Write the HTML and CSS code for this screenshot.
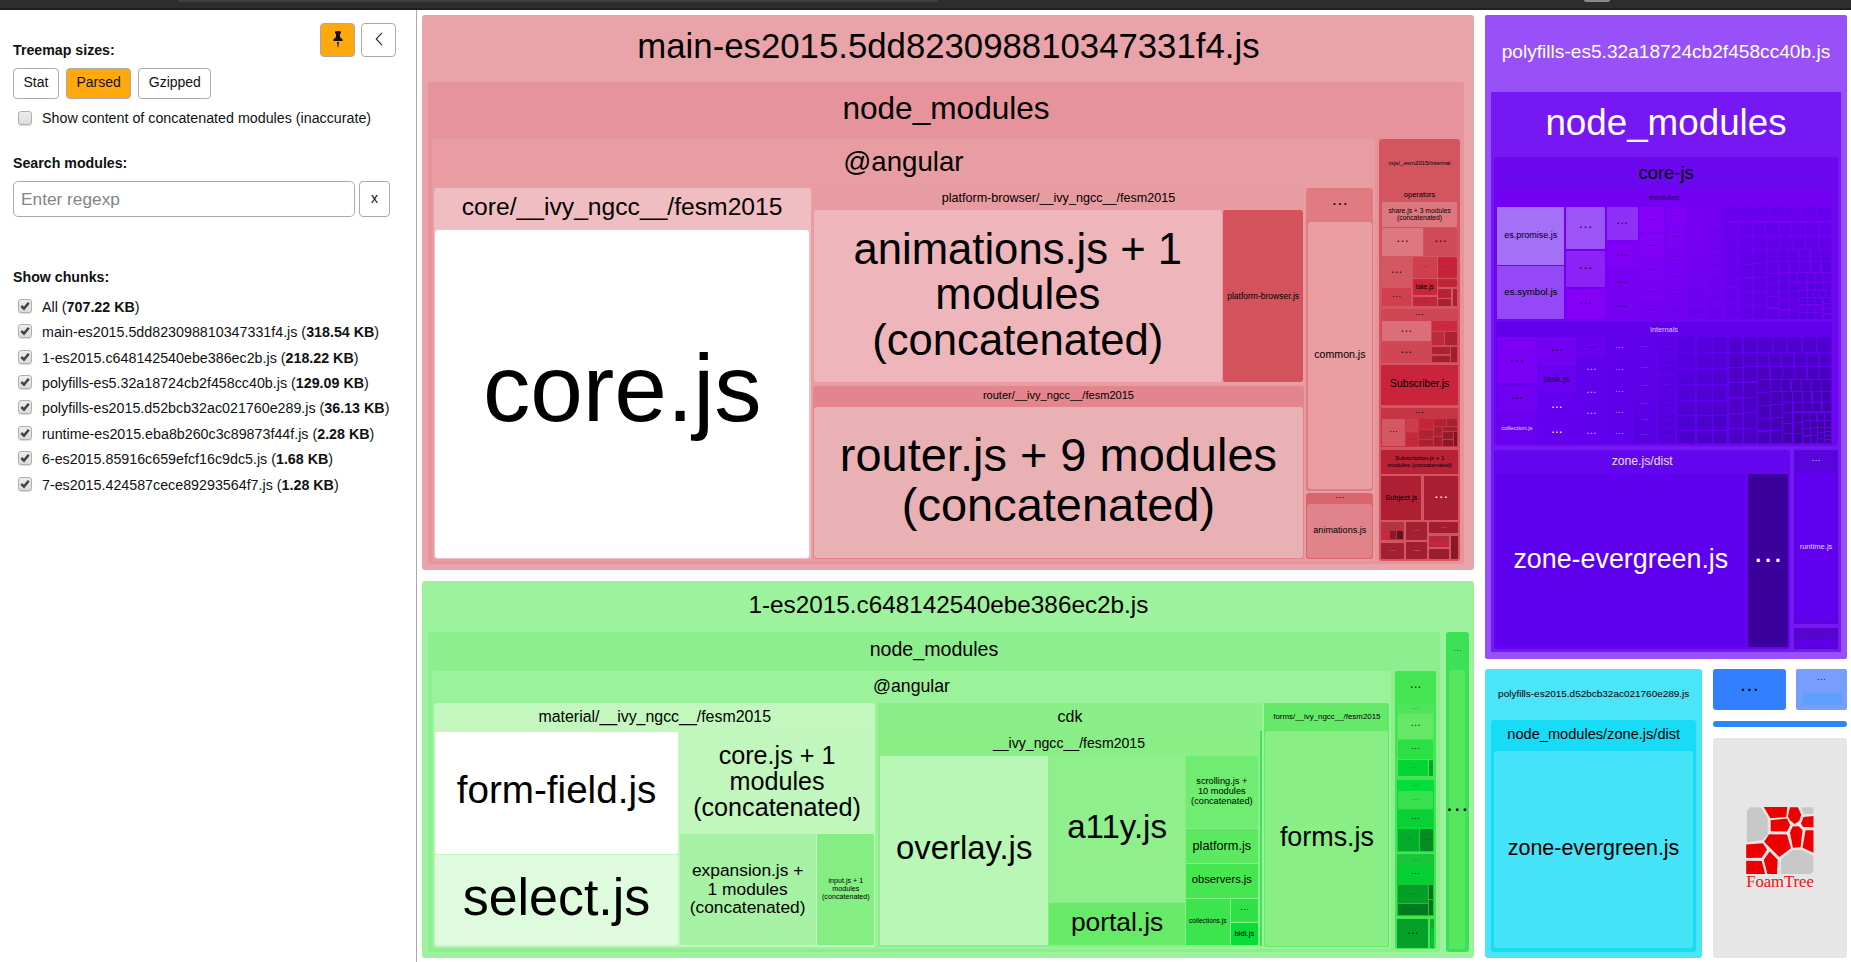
FILE: index.html
```html
<!DOCTYPE html>
<html lang="en">
<head>
<meta charset="utf-8">
<title>Webpack Bundle Analyzer</title>
<link rel="stylesheet" href="styles.css">
</head>
<body>
<div class="chrome"><span class="chrome-url"></span><span class="chrome-grip"></span></div>
<main class="app">
  <aside class="sidebar">
    <header class="side-head">
      <h2 class="title">Treemap sizes:</h2>
      <div class="side-tools">
        <button class="btn tool active" aria-label="Pin"><svg width="10" height="17" viewBox="0 0 10 17"><path d="M2 .6Q5 -.4 8 .6V2.2L7 2.9V6L9.6 8.4V10H.4V8.4L3 6V2.9L2 2.2ZM4 11H6L5.2 16.5H4.8Z" fill="#111"/></svg></button>
        <button class="btn tool" aria-label="Hide"><svg width="8" height="14" viewBox="0 0 8 14"><path d="M7 .8 1.2 7 7 13.2" fill="none" stroke="#222" stroke-width="1.1"/></svg></button>
      </div>
    </header>
    <div class="sizes">
      <button class="btn">Stat</button>
      <button class="btn active">Parsed</button>
      <button class="btn">Gzipped</button>
    </div>
    <div class="check concat"><i class="box"></i><span>Show content of concatenated modules (inaccurate)</span></div>
    <h2 class="title search-title">Search modules:</h2>
    <div class="search"><input class="field" placeholder="Enter regexp"><button class="btn clear">x</button></div>
    <h2 class="title chunks-title">Show chunks:</h2>
    <div class="chunks" id="chunks"></div>
  </aside>
  <section class="treemap" id="map"></section>
</main>
<template id="logo">
  <div class="logo">
    <svg width="68" height="67" viewBox="813 458 204 202">
      <g fill="#c8c8c8"><path d="M815 470 825 459H857L878 493V541L864 557 815 564Z"/><path d="M979 459H1016V478L987 479Z"/><path d="M918 616 953 587 980 588 1016 606V650L1008 660H918Z"/></g>
      <g fill="#ee0000"><path d="M866 458H937L934 488 886 492Z"/><path d="M945 459H969L979 481 973 500 959 509 945 498 939 486Z"/><path d="M986 488 1016 485V519L985 518 978 508Z"/><path d="M887 498 936 493 946 513 936 532 887 531Z"/><path d="M882 540 936 541 948 582 913 609 867 563Z"/><path d="M945 535 953 517 971 516 983 528 977 579 954 581Z"/><path d="M992 528H1016V596L983 581Z"/><path d="M813 571 863 567 876 586 860 611 813 612Z"/><path d="M813 620 860 621 870 660H813Z"/><path d="M884 592 908 617 906 660H877L866 617Z"/></g>
    </svg>
    <span class="logo-name">FoamTree</span>
  </div>
</template>
<script src="script.js"></script>
</body>
</html>
```
FILE: styles.css
```css
* { box-sizing: border-box; }
body {
  margin: 0;
  height: 962px;
  overflow: hidden;
  display: flex;
  flex-direction: column;
  background: #fff;
  color: #111;
  font: 14px "Liberation Sans", Arial, sans-serif;
}
.chrome {
  flex: none;
  height: 10px;
  padding-left: 178px;
  display: flex;
  align-items: flex-start;
  background: #2d2d2d;
  border-bottom: 2px solid #1f1f1f;
}
.chrome-url { width: 760px; height: 2px; background: #3f3f3f; border-radius: 0 0 8px 8px; }
.chrome-grip { width: 26px; height: 2px; margin-left: 646px; background: #8a8a8a; border-radius: 0 0 2px 2px; }
.app { flex: 1; min-height: 0; display: flex; }

.sidebar { flex: none; width: 417px; padding-left: 13px; border-right: 1px solid #aaa; }
.side-head { height: 49px; padding-right: 20px; display: flex; justify-content: space-between; align-items: flex-end; }
.side-tools { align-self: flex-start; display: flex; gap: 6px; padding-top: 13px; }
.title { margin: 0; font-size: 14.2px; line-height: 17px; font-weight: bold; }
.btn {
  height: 31px;
  padding: 0 9.5px 3px;
  border: 1px solid #aaa;
  border-radius: 4px;
  background: #fff;
  color: #111;
  font: inherit;
  line-height: 24px;
}
.btn.active { background: #ffa90f; }
.tool { width: 35px; height: 34px; padding: 0; display: flex; align-items: center; justify-content: center; padding-bottom: 2px; }
.sizes { display: flex; gap: 7px; margin-top: 9px; }
.check { display: flex; align-items: center; gap: 10px; padding-left: 5px; white-space: nowrap; font-size: 14.27px; }
.concat { height: 18px; margin-top: 10px; }
.box {
  width: 14px;
  height: 14px;
  flex: none;
  display: flex;
  border: 1px solid #b0b0b0;
  border-radius: 3px;
  background: linear-gradient(#ededed, #dcdcdc);
  box-shadow: 0 1px 1px #ddd;
}
.search-title { margin-top: 28px; }
.search { display: flex; gap: 4px; margin-top: 9px; }
.field {
  width: 342px;
  height: 36px;
  padding: 0 7px;
  border: 1px solid #aaa;
  border-radius: 5px;
  font: 17.3px "Liberation Sans", Arial, sans-serif;
}
.field::placeholder { color: #858585; }
.clear { width: 31px; height: 36px; }
.chunks-title { margin-top: 52px; }
.chunks { margin-top: 8px; }
.chunks .check { height: 25.43px; }
.chunks .box { margin-top: -2px; }

.treemap { flex: 1; min-width: 0; padding: 5px 4px 4.3px 5.4px; display: flex; }
.split, .tile { min-width: 0; min-height: 0; flex-basis: 0; flex-shrink: 1; }
.split, .kids { display: flex; }
.kids { flex: 1; min-height: 0; }
.col { flex-direction: column; }
.tile { display: flex; flex-direction: column; align-items: stretch; }
.label {
  display: flex;
  flex: none;
  align-items: center;
  justify-content: center;
  min-width: 0;
  color: #000;
  text-align: center;
  white-space: pre;
}
.leaf > .label { flex: 1; min-height: 0; }
.leaf > .label span { transform: translateY(-.05em); }
.label.light { color: #fff; }
.label.dots span { transform: translateY(-.27em); }
.logo { flex: 1; display: flex; flex-direction: column; align-items: center; justify-content: center; }
.logo-name { color: #ee1111; font: 16.6px/15px "Liberation Serif", serif; }
```
FILE: script.js
```js
const chunks = [
  ['All', '707.22 KB'],
  ['main-es2015.5dd823098810347331f4.js', '318.54 KB'],
  ['1-es2015.c648142540ebe386ec2b.js', '218.22 KB'],
  ['polyfills-es5.32a18724cb2f458cc40b.js', '129.09 KB'],
  ['polyfills-es2015.d52bcb32ac021760e289.js', '36.13 KB'],
  ['runtime-es2015.eba8b260c3c89873f44f.js', '2.28 KB'],
  ['6-es2015.85916c659efcf16c9dc5.js', '1.68 KB'],
  ['7-es2015.424587cece89293564f7.js', '1.28 KB'],
];
document.getElementById('chunks').innerHTML = chunks.map(([n, s]) =>
  `<div class="check"><i class="box"><svg width="12" height="12" viewBox="0 0 12 12"><path d="M2.3 6 5 8.6 9.8 2.8" fill="none" stroke="#444" stroke-width="2.5"/></svg></i><span>${n} (<b>${s}</b>)</span></div>`).join('');

// Tree builders. The first argument is the share of the parent's main axis.
const R = (s, g, ...k) => ({ s, g, k, split: 'row' });
const C = (s, g, ...k) => ({ s, g, k, split: 'col' });
const L = (s, c, t, w, o = {}) => ({ s, c, t, w, ...o });
// h: caption height, p: [top, right, bottom, left] padding round the children
const G = (s, c, t, w, h, p, d, g, k, o = {}) => ({ s, c, t, w, h, p, d, g, k, ...o });
const E = '…';
const D = (s, c, w = 5, o = {}) => L(s, c, E, w, { a: w < 7 ? .45 : .85, r: 1, ...o });

const ctx = document.createElement('canvas').getContext('2d');
ctx.font = '100px "Liberation Sans"';
const ink = t => Math.max(...t.split('\n').map(l => {
  const m = ctx.measureText(l);
  return m.actualBoundingBoxLeft + m.actualBoundingBoxRight;
}));
function label(n) {
  const el = document.createElement('div');
  el.className = 'label' + (n.light ? ' light' : '') + (n.t === E ? ' dots' : '');
  const span = document.createElement('span');
  span.textContent = n.t || '';
  if (n.t) el.style.fontSize = (100 * n.w / ink(n.t)).toFixed(2) + 'px';
  el.style.lineHeight = n.lh || 1.05;
  if (n.a) el.style.opacity = n.a;
  if (n.h) el.style.height = n.h + 'px';
  el.append(span);
  return el;
}
function draw(n) {
  const el = document.createElement('div');
  el.style.flexGrow = n.s;
  if (n.split) {
    el.className = 'split ' + n.split;
    el.style.gap = n.g + 'px';
    el.append(...n.k.map(draw));
    return el;
  }
  el.className = 'tile' + (n.k ? '' : ' leaf');
  el.style.background = n.c;
  el.style.borderRadius = (n.r ?? 3) + 'px';
  if (n.logo) { el.append(document.getElementById('logo').content.cloneNode(true)); return el; }
  el.append(label(n));
  if (n.k) {
    const kids = document.createElement('div');
    kids.className = 'kids ' + n.d;
    kids.style.padding = n.p.map(v => v + 'px').join(' ');
    kids.style.gap = n.g + 'px';
    kids.append(...n.k.map(draw));
    el.append(kids);
  }
  return el;
}

const mix = (a, b, t) => `rgb(${a.map((v, i) => Math.round(v + (b[i] - v) * t)).join()})`;
// Squarified tail of many tiny modules: one row across the top, one column down the left, recurse.
function tail(s, w, h, from, to, step = 0) {
  const t = Math.min(1, step / 6), cell = Math.max(7, 14.6 - step * 1.05);
  const c = mix(from, to, t), c2 = mix(from, to, Math.min(1, t + .12));
  const n = Math.max(2, Math.round(w / cell)), m = Math.max(2, Math.round((h - cell) / (cell * 1.05)));
  const a = Math.max(.15, .4 - step * .12), sz = 4;
  const mk = (k, col) => Array.from({ length: k }, () => step < 3 ? D(1, col, sz, { a }) : L(1, col, '', 0, { r: 0 }));
  if (step > 7 || w < 18 || h < 18) return R(s, 1.1, C(1, 1.1, ...mk(3, c)), C(1, 1.1, ...mk(4, c2)));
  return C(s, 1.2,
    R(cell, 1.2, ...mk(n, c)),
    R(h - cell, 1.2, C(cell, 1.2, ...mk(m, c2)), tail(w - cell, w - cell, h - cell, from, to, step + 1)));
}
const stack = (s, c1, c2, sizes, w, o) => C(s, 1.2, ...sizes.map((z, i) =>
  D(z, mix(c1, c2, i / Math.max(1, sizes.length - 1)), w, o)));

const operators = G(119, '#d35560', 'operators', 31, 13, [1, 1, 1, 1], 'col', 1, [
  L(24.7, '#dd7880', 'share.js + 3 modules\n(concatenated)', 62, { r: 1 }),
  R(28.3, 1, D(41, '#dd7780', 10), D(33.3, '#cf4b57', 10)),
  R(49, 1.5,
    C(29, 1, D(31, '#d45863', 9), D(18, '#d03f4d', 7)),
    C(24, 1.5, D(21, '#cf3f4e', 6), L(16, '#c9253b', 'take.js', 18, { r: 1 }), D(9, '#c2263a')),
    C(19, 1.5, D(21, '#c9233b', 6), D(8, '#bd2638', 4),
      R(17, 1.3, C(13, 1.3, D(9, '#b52335', 4), D(7, '#ab2032', 4)), L(4.3, '#a82231', '', 0, { r: 0 })))),
], { r: 1 });

const rxjs = G(81, '#d35560', 'rxjs/_esm2015/internal', 61, 49, [0, 2, 1.7, 2], 'col', 2.6, [
  operators,
  G(53.4, '#cf4654', E, 7, 11.4, [0, 1, 1, 1], 'row', 1.5, [
    C(48.5, 1, D(21, '#db6e78', 9), D(20, '#cf4654', 9)),
    C(25, 1.5, D(10.3, '#cb2a40'), R(13, 1.3, D(11.7, '#bf2a3d', 4), D(12, '#ac2235', 4)),
      R(15, 1.3, C(17.5, 1.3, D(7.7, '#ab2233', 4), D(6, '#a02030', 4)), L(6, '#9b2130', '', 0, { r: 0 }))),
  ], { r: 1 }),
  L(40.3, '#c9243b', 'Subscriber.js', 58.5, { r: 1 }),
  G(39, '#c53546', E, 7, 10.7, [0, 1, 1, 1], 'row', 1.2, [
    D(23, '#d45863', 7),
    C(12, 1.2, D(13, '#ce3d4d', 4), D(13, '#c4283b', 4)),
    C(14, 1.2, D(10.5, '#c62439', 4), D(9, '#b32234', 4), D(6, '#a82232', 4)),
    C(23, 1.2, R(7.3, 1.2, D(12, '#b52033', 4), D(10, '#a82132', 4)),
      R(19, 1.2, C(7.5, 1.2, D(9, '#a82333', 3), D(8.5, '#a21f31', 3)),
        C(13.5, 1.2, D(4, '#a32031', 3), R(13.5, 1.2, C(9, 1.2, D(6, '#931b2b', 3), D(6, '#8b1828', 3)), L(3, '#7c1423', '', 0, { r: 0 }))))),
  ], { r: 1 }),
  L(24, '#b92136', 'Subscription.js + 1\nmodules (concatenated)', 64, { r: 1, lh: 1 }),
  R(43.5, 2.6, L(40.5, '#ae1f33', 'Subject.js', 31.5, { r: 1 }), D(34.2, '#a81f31', 11, { light: 1, a: 1 })),
  R(37, 2, C(23, 2.6, G(18, '#b53443', E, 4, 9.3, [0, 1, 1, 1], 'row', 1.5,
      [L(6.5, '#cb2740', '', 0, { r: 0 }), L(6, '#8e1a29', '', 0, { r: 0 }), L(5.7, '#651020', '', 0, { r: 0 })], { r: 1, a: .3 }),
      D(16, '#a32032', 6, { light: 1 })),
    C(21, 2, D(18, '#a32032', 5, { light: 1 }), D(17.5, '#a01e30', 5, { light: 1, a: .7 })),
    C(29, 2.4, D(11, '#a11c2f', 5, { light: 1 }), R(23.4, 2, C(20, 2, G(11.5, '#b22c3d', E, 4, 6, [0, 1, 1, 1], 'row', 0, [L(1, '#cc2440', '', 0, { r: 0 })], { r: 1, a: .3 }), D(10, '#9a1c2e', 4)), D(7, '#8a1828', 4)))),
]);

const angularMain = G(944, '#e79da2', '@angular', 118, 44.7, [4, 2, 1.7, 2.2], 'row', 2.4, [
  G(376.8, '#f0bec2', 'core/__ivy_ngcc__/fesm2015', 319, 38.3, [4, 1.3, 1.3, 1.4], 'row', 0, [L(1, '#fff', 'core.js', 272)]),
  C(491, 3.8,
    G(194.8, '#e69ca1', 'platform-browser/__ivy_ngcc__/fesm2015', 232.5, 21, [1.3, .7, .3, 1], 'row', 1.4, [
      L(407.7, '#eeb6bb', 'animations.js + 1\nmodules\n(concatenated)', 325, { lh: 1.045 }), L(80.2, '#d4525c', 'platform-browser.js', 71)]),
    G(173, '#e2858c', 'router/__ivy_ngcc__/fesm2015', 150, 19.5, [1, 1, .9, 1], 'row', 0, [
      L(1, '#eab1b4', 'router.js + 9 modules\n(concatenated)', 433, { lh: 1.08 })])),
  C(67, 2.5,
    G(303, '#e07b82', E, 12.7, 33, [1.6, 1.3, 1.4, 1.5], 'row', 0, [L(1, '#e99ea2', 'common.js', 50.5)]),
    G(66, '#d9656f', E, 7, 10.5, [.3, 1, 1.3, 1], 'row', 0, [L(1, '#e0838a', 'animations.js', 52.5)])),
]);

const mainChunk = G(555, '#e9a4aa', 'main-es2015.5dd823098810347331f4.js', 619, 63, [4, 10.8, 5.8, 6], 'row', 0, [
  G(1, '#e6939b', 'node_modules', 204.5, 54, [3, 3.6, 3.5, 3.2], 'row', 3.8, [angularMain, rxjs])]);

const cdk = G(383.5, '#8bef89', 'cdk', 24.3, 28, [0, .3, 1.2, 1], 'row', .7, [
  G(380, '#89ee85', '__ivy_ngcc__/fesm2015', 152, 24.5, [0, 1, .8, 1], 'row', 1.1, [
    L(168, '#b8f7b5', 'overlay.js', 134, { r: 1 }),
    C(135, .8, L(146, '#8eef8c', 'a11y.js', 97.5, { r: 1 }), L(42, '#66ea67', 'portal.js', 90, { r: 1 })),
    C(72, 1.2, L(72, '#71ec73', 'scrolling.js +\n10 modules\n(concatenated)', 60.5, { r: 0 }), L(34, '#5ce961', 'platform.js', 57.5, { r: 0 }),
      L(33, '#46e650', 'observers.js', 59.5, { r: 0 }),
      R(46, 1.2, L(44, '#3ce44e', 'collections.js', 37, { r: 0 }), C(27, 1, D(23, '#31e148', 7, { r: 0 }), L(22, '#08dd38', 'bidi.js', 19, { r: 0 })))),
  ], { r: 0 }),
  L(2, '#3fe258', '', 0, { r: 0 })]);

const angularLazy = G(959.5, '#9af39a', '@angular', 75.5, 31, [1.6, 2, 2.2, 2.3], 'row', 2.6, [
  G(441, '#c3f7be', 'material/__ivy_ngcc__/fesm2015', 231, 28.4, [0, 1, 1.4, .8], 'row', 1.5, [
    C(243.5, 1.5, L(122, '#fff', 'form-field.js', 198, { r: 2 }), L(90.3, '#defbdd', 'select.js', 185, { r: 2 })),
    C(195, 1, L(101.3, '#c1f6bd', 'core.js + 1\nmodules\n(concatenated)', 165, { r: 1, lh: 1.04 }),
      R(111.3, 1.6, L(135.5, '#a7f2a4', 'expansion.js +\n1 modules\n(concatenated)', 114, { r: 1 }), L(57, '#84ee82', 'input.js + 1\nmodules\n(concatenated)', 47, { r: 1 })))]),
  cdk,
  G(124.7, '#66e968', 'forms/__ivy_ngcc__/fesm2015', 107, 28, [.1, .9, 1, 1], 'row', 0, [L(1, '#88ee85', 'forms.js', 93, { r: 2 })], { r: 2 }),
]);

const smallGreen = G(41, '#44e453', E, 9, 33, [0, 2, 1.3, 2], 'col', 2.8, [
  G(73.5, '#4ee658', E, 5, 10, [0, 1, 1, 1], 'col', 1.4, [D(25, '#66e867', 8), D(19, '#2ae143', 7),
    R(16, 1, D(30, '#04d334', 6), D(4, '#04a82c', 3))], { r: 0, a: .5 }),
  G(71.5, '#04dd3c', E, 5, 11, [0, 1, 1, 1], 'col', 1.4, [D(17.5, '#38e04c', 6), D(17.5, '#08d035', 7),
    R(21.7, 1.2, D(21, '#04ac2b', 6), D(13, '#068a24', 5))], { r: 0, a: .5 }),
  G(61.5, '#18c53b', E, 5, 11, [0, 1, 1, 1], 'col', 1.4, [D(18, '#04d033', 7),
    R(30.4, 1, C(30, 1.6, D(18, '#059f27', 6), D(10.4, '#047a1e', 5)), C(4, 1, L(14.5, '#056e1a', '', 0, { r: 0 }), L(14.5, '#056e1a', '', 0, { r: 0 })))], { r: 0, a: .5 }),
  R(29, 1.6, D(31, '#04a028', 9), G(4, '#18a835', '', 0, 10, [0, 0, 1, 1], 'row', 0, [L(1, '#00c83a', '', 0, { r: 0 })], { r: 0 })),
], { r: 2 });

const lazyChunk = G(376.7, '#9df29e', '1-es2015.c648142540ebe386ec2b.js', 397.5, 47, [4, 5.5, 5.7, 5.9], 'row', 6.3, [
  G(1011.4, '#8dee8f', 'node_modules', 127, 35, [3.7, 3.6, 3, 3.5], 'row', 3.8, [angularLazy, smallGreen]),
  G(23, '#3be257', E, 7, 38.3, [0, 3.6, 3, 3], 'row', 0, [D(1, '#55e85e', 18, { a: 1, r: 2 })], { a: .6 })]);

const P1 = [134, 0, 248], P2 = [106, 0, 240];
const modules = G(129.7, '#7300f3', 'modules', 29.5, 16.6, [.4, 1, 1, 1], 'row', 1.6, [
  C(67, 1.4, L(58, '#a570f8', 'es.promise.js', 52.5, { r: 0 }), L(53, '#9448f8', 'es.symbol.js', 52.5, { r: 0 })),
  C(39, 1.6, D(42, '#9b54f8', 11), D(36, '#8c22f5', 11), D(30, '#8500f7', 10)),
  C(31, 1.6, D(32.7, '#8e30f8', 9), D(28, '#8000f6', 9), D(23, '#7800f4', 8), D(23, '#7600f3', 7)),
  stack(25, P1, [116, 0, 243], [25, 25, 22, 18, 17], 7, { a: .85 }),
  stack(20, [128, 0, 247], [112, 0, 242], [20, 20, 20, 18, 17, 15], 6, { a: .7 }),
  stack(17.5, [122, 0, 245], P2, [16, 17, 16, 16, 16, 15, 14], 5, { a: .5 }),
  stack(15.5, [116, 0, 243], P2, [16, 17, 16, 16, 16, 15, 14], 5, { a: .5 }),
  tail(107, 107, 112, [104, 0, 240], [88, 0, 222]),
], { r: 1, a: .8 });
const Q = [93, 0, 235];
const internals = G(121.7, '#6200ee', 'internals', 27, 14.6, [.4, 1, 1, 1], 'row', 1.6, [
  C(40, 1.4, D(46, '#7c00f5', 12), D(28, '#7000f2', 10), L(29, '#6a00f0', 'collection.js', 31, { r: 1, light: 1, a: .8 })),
  C(38, 1.4, D(29, '#7400f2', 10), L(26, '#6900f0', 'task.js', 26, { r: 1 }), D(27, '#6400ef', 9, { light: 1, a: 1 }), D(22, '#6300ee', 9, { light: 1, a: 1 })),
  C(29, 1.4, D(21, '#6a00f0', 8), ...[22, 21, 19, 19].map(v => D(v, '#6000ec', 8, { light: 1, a: .7 }))),
  stack(25, [96, 0, 236], Q, [21, 21, 21, 20, 19], 7, { light: 1, a: .55 }),
  stack(23, [96, 0, 236], [88, 0, 226], [20, 19, 16, 16, 14, 15], 6, { light: 1, a: .4 }),
  stack(18, [92, 0, 232], [84, 0, 218], [18, 18, 17, 17, 15, 15], 5, { light: 1, a: .15 }),
  stack(18.5, [88, 0, 228], [76, 0, 206], [15, 16, 16, 15, 15, 14, 13], 5, { a: .3 }),
  stack(15.5, [86, 0, 222], [76, 0, 204], [15, 16, 16, 15, 15, 14, 13], 5, { a: .3 }),
  stack(14, [84, 0, 218], [76, 0, 200], [15, 16, 16, 15, 15, 14, 13], 4, { a: .3 }),
  tail(104, 104, 106, [80, 0, 206], [62, 0, 166]),
], { r: 1, light: 1, a: .75 });

const es5Chunk = G(643.7, '#9850f8', 'polyfills-es5.32a18724cb2f458cc40b.js', 327, 75, [2, 6, 6.5, 6], 'row', 0, [
  G(1, '#7518f4', 'node_modules', 238, 62, [3, 3, 3, 3.3], 'col', 4, [
    G(289, '#6d07f0', 'core-js', 54, 31, [2, 6, 2, 2], 'col', 2.4, [modules, internals]),
    R(199, 4,
      G(295.7, '#6306ef', 'zone.js/dist', 60.5, 22, [1.7, 2, 2, 2], 'row', 2.6, [
        L(249, '#5e00ee', 'zone-evergreen.js', 213, { light: 1, r: 2 }), L(40, '#3c009c', E, 23, { light: 1, r: 2 })], { light: 1, a: 0.85 }),
      C(44, 4, G(174, '#5804da', E, 7, 21.3, [0, 2, 2, 2], 'row', 0, [L(1, '#6000ee', 'runtime.js', 32, { light: 1, a: .8, r: 1 })], { light: 1, a: .7, r: 1 }),
        G(21, '#5804cf', E, 5, 11.7, [0, 2, 2, 2], 'row', 0, [D(1, '#5c00e8', 5, { a: .3 })], { a: .3, r: 1 }))),
  ], { light: 1, r: 1 })], { light: 1, r: 2 });

const es2015Chunk = G(217.5, '#4ce4f8', 'polyfills-es2015.d52bcb32ac021760e289.js', 190.5, 51, [0, 6, 6, 6], 'row', 0, [
  G(1, '#18dcf6', 'node_modules/zone.js/dist', 172, 29, [2, 3.3, 3.5, 3], 'row', 0, [L(1, '#45e4f8', 'zone-evergreen.js', 170)])]);

const tree = [
  C(1052, 11, mainChunk, lazyChunk),
  C(362, 10.3, es5Chunk, R(288.7, 10.5, es2015Chunk,
    C(134, 10.7,
      R(41, 10.5, L(72.7, '#3380fe', E, 15), G(51, '#779efe', E, 7, 22, [1.7, 5.5, 5, 5.7], 'row', 0, [L(1, '#5fa0fe', '', 0, { r: 0 })], { a: .8, r: 2 })),
      L(6.3, '#2b88fb', '', 0),
      { s: 219.7, c: '#e6e6e6', logo: true }))),
];
const map = document.getElementById('map');
map.style.gap = '10.5px';
map.append(...tree.map(draw));
```
